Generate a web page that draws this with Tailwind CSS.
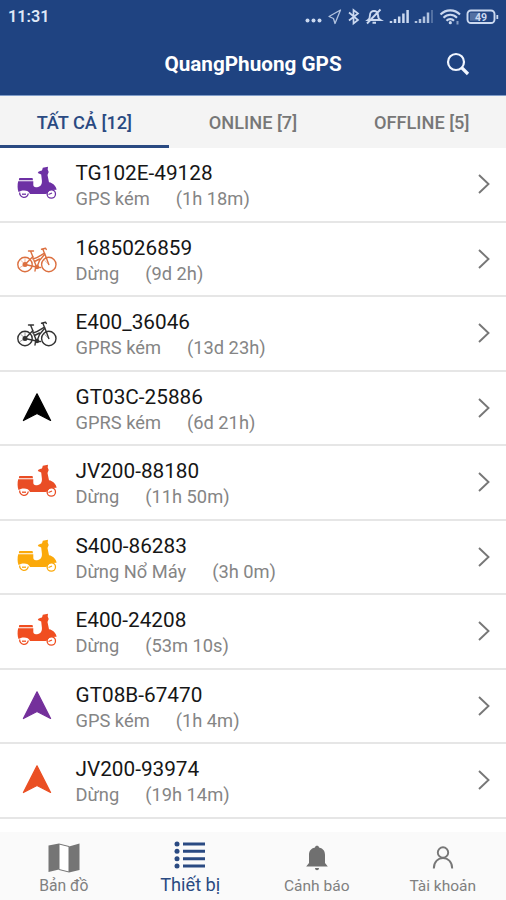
<!DOCTYPE html>
<html lang="vi">
<head>
<meta charset="utf-8">
<title>QuangPhuong GPS</title>
<script src="https://cdn.jsdelivr.net/npm/@tailwindcss/browser@4"></script>
</head>
<body class="w-[506px] h-[900px] overflow-hidden bg-white font-['Roboto',sans-serif] flex flex-col">
<svg class="hidden">
  <symbol id="scooter" viewBox="0 0 40 36">
    <g fill="currentColor">
      <path d="M2.300 12H15.500L16 14.300H1.800z"/>
      <path d="M1.200 15.300H16.300V18.800C16.300 20.800 17.500 21.500 20 21.200C23.500 20.700 25.200 18.500 24.900 14.500L24.200 8.500L20.800 7C21.300 5.300 23.500 5 25 4.600L25.800 1.800L31 .8L30.700 3.500L31.700 6L30.500 9L32 16.300C36 17 39 20 39.600 23.800L34.500 24C31.500 24.200 31 28 28.500 28H13C12 25.400 10 24.400 7 24.400C4.500 24.400 3 25 1.500 26C.4 23 .3 18.500 1.200 15.300z"/>
    </g>
    <g fill="none" stroke="currentColor" stroke-width="1.300"><path d="M2.700 26.500a4.200 4.200 0 1 0 8.600 1"/><path d="M5 28.200h4"/><circle cx="34.300" cy="28" r="4.200"/><path d="M31.500 28.500l3.500-1.500"/></g>
  </symbol>
  <symbol id="bike" viewBox="0 0 40 26">
    <g fill="none" stroke="currentColor" stroke-width="1.400" stroke-linejoin="round" stroke-linecap="round">
      <circle cx="8" cy="17.500" r="7.200"/><circle cx="31.800" cy="17.500" r="7.200"/>
      <path d="M8 17.500L16 9.500M15.500 9.500L19.500 20L8 17.500M16 10L13.500 4M11.500 4h5M16 12C21 11 24 8 27.500 6L31.800 17.500M20 20L22.500 13.500L27.500 7.500M27.500 6.500L26 2.500M24.500 2.200L28.500 1.200L29.300 2.500M17.500 14.500L22.500 12M18.500 20.500l-.5 3.500M20 20.500h3.500"/>
      <circle cx="20" cy="20" r="1.500" fill="currentColor"/><circle cx="8" cy="17.500" r="1.800" fill="currentColor"/><path stroke-width=".5" d="M31.800 17.500l-4-4M8 17.500v-6M8 17.500l-5 3M8 17.500l-4-4"/>
    </g>
  </symbol>
  <symbol id="arrow" viewBox="0 0 30 30"><path fill="currentColor" stroke="currentColor" stroke-width="1.200" stroke-linejoin="round" d="M15 .8L28.600 27.500L15 20.500L1.400 27.500z"/></symbol>
</svg>

<header class="h-24 shrink-0 bg-[#1f4381] border-b border-[#7f9cc8] text-white flex flex-col">
  <div class="h-8 flex items-center justify-between pl-2 pr-1.5 pt-0.5">
    <span class="text-[16.200px] font-semibold text-[#dfe8f7] leading-none">11:31</span>
    <svg class="w-[200px] h-[22px] text-[#cbd9f0]" viewBox="0 0 200 22" fill="none" stroke="currentColor">
      <g fill="currentColor" stroke="none"><circle cx="7.500" cy="14.500" r="2"/><circle cx="13.500" cy="14.500" r="2"/><circle cx="19.500" cy="14.500" r="2"/></g>
      <path stroke-width="1.300" stroke-linejoin="round" opacity=".85" d="M40.500 4L29 10.500L33.500 12.500L35 17.500z"/>
      <path stroke-width="1.700" d="M49 6.500L58 14L53.500 17.500V4L58 7.500L49 14.500"/>
      <path transform="translate(-2.500 0)" stroke-width="1.900" d="M70.500 14C72.500 12.500 72.500 11 72.500 9C72.500 6.500 74.500 5 76.500 5S80.500 6.500 80.500 9C80.500 11 80.500 12.500 83 14zM75 16.700h3.500M69.500 17.500L83 3.500"/>
      <g transform="translate(-3 0)"><path stroke-width="2.500" d="M94 17v-2M98 17v-4M102.200 17v-6.500M106.400 17V7.500M110.600 17V4"/><path stroke-width="2.500" opacity=".85" d="M119 17v-2M123 17v-4M127 17v-6.500M131 17V6.500"/><path stroke-width="2" opacity=".3" d="M135 17V4"/></g>
      <g transform="translate(-1 0)">
        <path stroke-width="2.100" d="M141.500 8.500C147 3 155.500 3 161 8.500M144.500 11.800C148.500 7.800 154 7.800 158 11.800M147.500 14.800C149.500 12.500 153 12.500 155 14.800"/><circle cx="151.300" cy="16.700" r="1.600" fill="currentColor" stroke="none"/><path stroke-width="2" opacity=".6" d="M158.500 15v3.500"/>
        <rect x="168.500" y="4.500" width="27" height="12.500" rx="3.500" stroke-width="1.900"/><path stroke-width="1.800" d="M198.300 9v4"/>
        <rect x="171" y="6.700" width="10" height="8" fill="currentColor" opacity=".3" stroke="none"/>
        <text x="182" y="14.500" text-anchor="middle" font-size="10.500" font-weight="700" fill="currentColor" stroke="none">49</text>
      </g>
    </svg>
  </div>
  <div class="flex-1 grid grid-cols-[1fr_auto_1fr] items-center pt-0.5">
    <span></span>
    <h1 class="text-[20.700px] font-bold leading-none">QuangPhuong GPS</h1>
    <svg class="w-7 h-7 justify-self-end mr-[34px]" viewBox="0 0 28 28" fill="none" stroke="#f1f6ff"><circle cx="12" cy="11" r="8" stroke-width="2.200"/><path stroke-width="3.200" d="M17.500 16.500l6.500 6.500"/></svg>
  </div>
</header>

<nav class="h-[52px] shrink-0 grid grid-cols-3 bg-[#f4f4f4] text-[18.200px] font-medium text-[#777] text-center">
  <div class="text-[#2a4a82] border-b-[3px] border-[#2a4a82] leading-[53px] h-[52px]">TẤT CẢ [12]</div>
  <div class="leading-[53px]">ONLINE [7]</div>
  <div class="leading-[53px]">OFFLINE [5]</div>
</nav>

<main id="list" class="flex-1 min-h-0 overflow-hidden bg-white"></main>

<footer class="h-[68px] shrink-0 bg-[#fafafa] grid grid-cols-4 text-[#808080] text-[15.700px] text-center">
  <div class="flex flex-col items-center pt-[11px]">
    <svg class="w-8 h-[30px] ml-px" viewBox="0 0 32 30" fill="#757575"><path d="M.5 2.500L11 .5v26L.5 29zM21 3.500L31.500.5V27L21 29.500z"/><path d="M11 1l10 2.500v25.500L11 26.500z" fill="#fff" stroke="#757575" stroke-width="1"/></svg>
    <span class="leading-5 mt-[3px] pl-px">Bản đồ</span>
  </div>
  <div class="flex flex-col items-center pt-[9px] text-[#2a4a82]">
    <svg class="w-8 h-[28px]" viewBox="0 0 32 28" fill="currentColor"><circle cx="3" cy="3" r="2.500"/><circle cx="3" cy="10.300" r="2.500"/><circle cx="3" cy="17.700" r="2.500"/><circle cx="3" cy="25" r="2.500"/><path d="M9 1.500h22v3H9zM9 8.800h22v3H9zM9 16.200h22v3H9zM9 23.500h22v3H9z"/></svg>
    <span class="leading-5 mt-[6px] pl-px text-[18.200px]">Thiết bị</span>
  </div>
  <div class="flex flex-col items-center pt-[13px]">
    <svg class="w-[22px] h-[26px] ml-px" viewBox="0 0 22 26" fill="#707070"><path d="M9 2.500C9 0 13 0 13 2.500C17.500 3.500 19 6.500 19 10V18L21.800 21.500H.2L3 18V10C3 6.500 4.500 3.500 9 2.500zM9 23h4c0 3-4 3-4 0z"/></svg>
    <span class="leading-5 mt-[5px] pl-px text-[15.500px]">Cảnh báo</span>
  </div>
  <div class="flex flex-col items-center pt-[13px]">
    <svg class="w-[22px] h-[26px] ml-px" viewBox="0 0 22 26" fill="none" stroke="#777" stroke-width="1.900"><circle cx="11" cy="7.500" r="5.200"/><path d="M1.800 23.500c0-14 18.400-14 18.400 0"/></svg>
    <span class="leading-5 mt-[5px] text-[15.500px]">Tài khoản</span>
  </div>
</footer>

<script>
const devices = [
  ["scooter", "text-[#6d30a4]", "TG102E-49128", "GPS kém", "(1h 18m)"],
  ["bike", "text-[#dc7040]", "1685026859", "Dừng", "(9d 2h)"],
  ["bike", "text-[#333333]", "E400_36046", "GPRS kém", "(13d 23h)"],
  ["arrow", "text-black", "GT03C-25886", "GPRS kém", "(6d 21h)"],
  ["scooter", "text-[#e94d25]", "JV200-88180", "Dừng", "(11h 50m)"],
  ["scooter", "text-[#fba90b]", "S400-86283", "Dừng Nổ Máy", "(3h 0m)"],
  ["scooter", "text-[#f04e20]", "E400-24208", "Dừng", "(53m 10s)"],
  ["arrow", "text-[#74309b]", "GT08B-67470", "GPS kém", "(1h 4m)"],
  ["arrow", "text-[#ea4f23]", "JV200-93974", "Dừng", "(19h 14m)"]
];
const sizes = { scooter: "w-10 h-9", bike: "w-10 h-[26px] mt-0.5", arrow: "w-[30px] h-[30px]" };
document.getElementById("list").innerHTML = devices.map(([icon, color, name, state, time]) => `
  <div class="h-[74.500px] flex items-center border-b-2 border-[#e6e6e6]">
    <div class="w-[74px] flex justify-center shrink-0"><svg class="${sizes[icon]} ${color}"><use href="#${icon}"/></svg></div>
    <div class="flex-1 pl-[1.500px] pt-[3.500px]">
      <div class="text-[20.750px] leading-[26px] text-[#161616]">${name}</div>
      <div class="text-[18.300px] leading-[26px] text-[#858585] flex gap-[26px]"><span>${state}</span><span>${time}</span></div>
    </div>
    <svg class="w-3 h-5 mr-4" viewBox="0 0 12 20" fill="none" stroke="#777" stroke-width="1.900"><path d="M1 1l9.500 9L1 19"/></svg>
  </div>`).join("");
</script>
</body>
</html>
